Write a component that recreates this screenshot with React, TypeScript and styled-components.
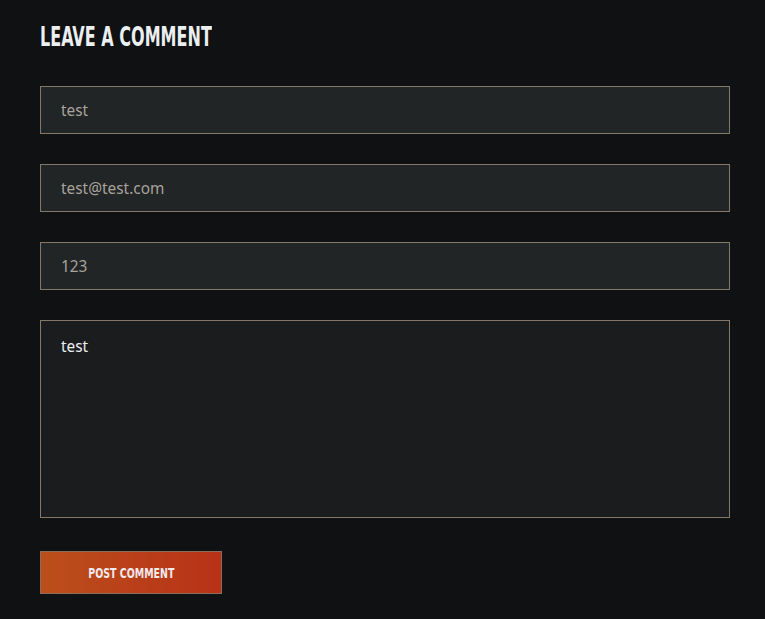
import styled, { createGlobalStyle } from "styled-components";

const GlobalStyle = createGlobalStyle`
  html, body {
    margin: 0;
    padding: 0;
    background: #101113;
  }
  body {
    font-family: "Noto Sans", "Open Sans", sans-serif;
  }
`;

const Page = styled.div`
  min-height: 619px;
  box-sizing: border-box;
  padding: 22px 35px 0 40px;
  background: #101113;
`;

const Title = styled.h3`
  margin: 0 0 34px;
  font-family: "DejaVu Sans Condensed", "DejaVu Sans", sans-serif;
  font-weight: 700;
  font-size: 26px;
  line-height: 30px;
  color: #eceff1;
  text-transform: uppercase;
  white-space: nowrap;
`;

// narrow display face isn't installed, so squeeze the condensed one
const Squeeze = styled.span<{ $x: number }>`
  display: inline-block;
  transform: scaleX(${(p) => p.$x});
  transform-origin: left center;
`;

const Form = styled.form`
  display: flex;
  flex-direction: column;
  gap: 30px;
`;

const Field = styled.input`
  box-sizing: border-box;
  width: 690px;
  height: 48px;
  padding: 0 20px;
  background: #212526;
  border: 1px solid #857868;
  border-radius: 0;
  color: #a8a39c;
  font-family: "Noto Sans", "Open Sans", sans-serif;
  font-size: 15.4px;
  outline: none;
`;

const Message = styled.textarea`
  box-sizing: border-box;
  width: 690px;
  height: 198px;
  padding: 16px 20px;
  background: #1b1c1e;
  border: 1px solid #857868;
  border-radius: 0;
  color: #eceef0;
  font-family: "Noto Sans", "Open Sans", sans-serif;
  font-size: 15.4px;
  line-height: 20px;
  resize: none;
  outline: none;
`;

const Submit = styled.button`
  align-self: flex-start;
  width: 182px;
  height: 43px;
  margin-top: 3px;
  padding: 0;
  background: linear-gradient(90deg, #bb4f1b 0%, #b83117 100%);
  border: 1px solid #8a6e5c;
  color: #f1e9ee;
  font-family: "DejaVu Sans Condensed", "DejaVu Sans", sans-serif;
  font-weight: 700;
  font-size: 14px;
  text-transform: uppercase;
  white-space: nowrap;
  cursor: pointer;
`;

const ButtonLabel = styled.span`
  display: inline-block;
  transform: scaleX(0.75);
`;

export default function App() {
  return (
    <>
      <GlobalStyle />
      <Page>
        <Title>
          <Squeeze $x={0.685}>Leave a comment</Squeeze>
        </Title>
        <Form onSubmit={(e) => e.preventDefault()}>
          <Field type="text" defaultValue="test" />
          <Field type="email" defaultValue="test@test.com" />
          <Field type="text" defaultValue="123" />
          <Message defaultValue="test" />
          <Submit type="submit">
            <ButtonLabel>Post comment</ButtonLabel>
          </Submit>
        </Form>
      </Page>
    </>
  );
}
